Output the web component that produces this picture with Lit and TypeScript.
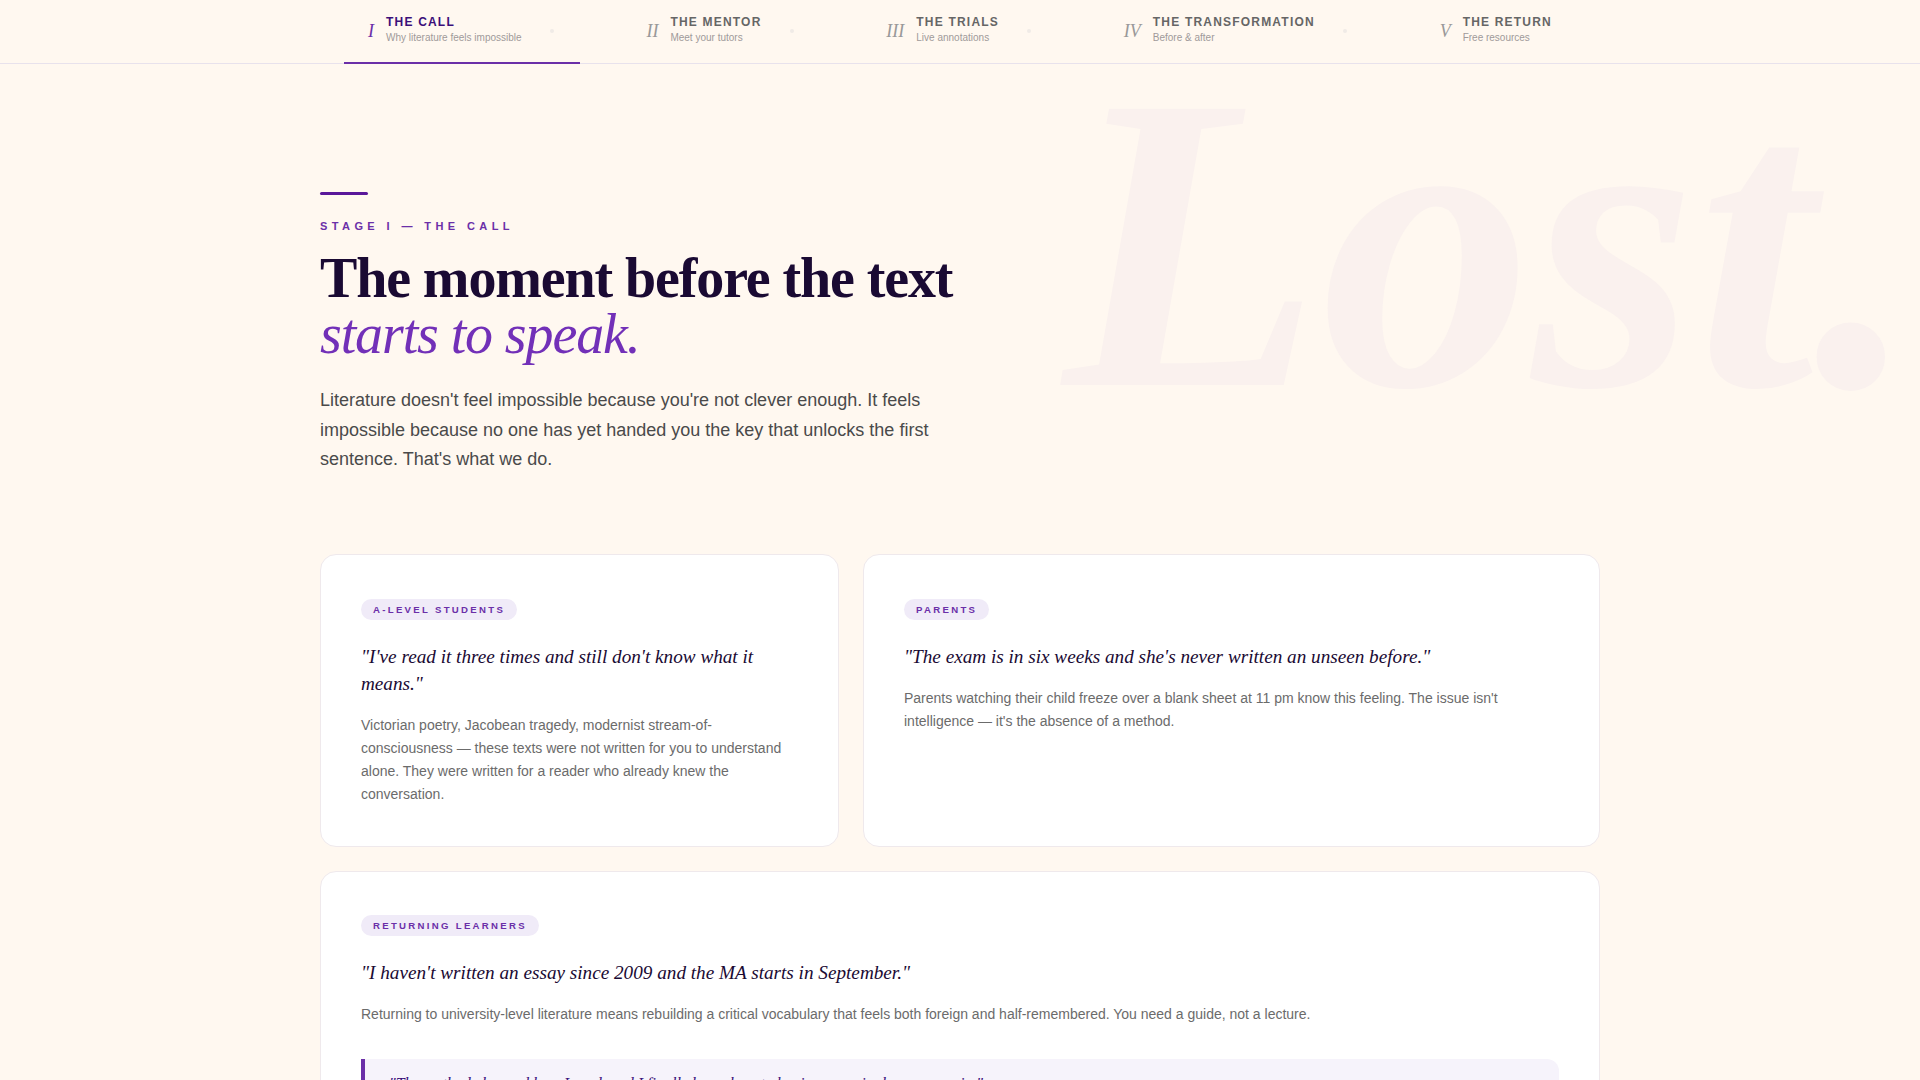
import { LitElement, html, css } from "lit";
import { customElement } from "lit/decorators.js";

const stages = [
  ["I", "THE CALL", "Why literature feels impossible"],
  ["II", "THE MENTOR", "Meet your tutors"],
  ["III", "THE TRIALS", "Live annotations"],
  ["IV", "THE TRANSFORMATION", "Before & after"],
  ["V", "THE RETURN", "Free resources"],
];

@customElement("app-root")
export class AppRoot extends LitElement {
  static styles = css`
    :host { display: block; background: #fff8f0; font-family: "Liberation Sans", Arial, sans-serif; overflow: hidden; position: relative; height: 1080px; }
    * { box-sizing: border-box; }
    .nav { height: 64px; border-bottom: 1px solid #e8e2ec; }
    .nav-in { max-width: 1280px; margin: 0 auto; padding: 0 24px; display: flex; justify-content: space-between; height: 64px; }
    .tab { display: flex; align-items: center; gap: 12px; padding: 0 24px; height: 64px; border-bottom: 2px solid transparent; }
    .tab.on { border-bottom-color: #6b2fa8; }
    .num { font-family: "Liberation Serif", serif; font-style: italic; font-size: 18px; color: #999; line-height: 1; }
    .on .num { color: #6b2fa8; }
    .txt { display: block; padding-bottom: 3px; }
    .tt { display: block; font-size: 12px; font-weight: 700; letter-spacing: 0.1em; color: #666; line-height: 15px; }
    .on .tt { color: #3b0f7a; }
    .ts { display: block; font-size: 10px; color: #a09a9a; line-height: 15px; }
    .dot { width: 4px; height: 4px; border-radius: 50%; background: #f0ebe7; margin-left: 16px; margin-right: 2px; }
    .main { max-width: 1280px; margin: 0 auto; position: relative; }
    .ghost { position: absolute; right: -319px; top: -32px; font-family: "Liberation Serif", serif; font-style: italic; font-weight: 700; font-size: 422px; line-height: 1; color: #faf1ee; white-space: nowrap; pointer-events: none; }
    .hero { position: relative; padding-top: 128px; }
    .rule { width: 48px; height: 3px; background: #5a189a; border-radius: 2px; }
    .eye { margin-top: 26px; font-size: 11px; font-weight: 700; letter-spacing: 0.4em; color: #6b2fa8; line-height: 11px; }
    h1 { margin: 18px 0 0; font-family: "Liberation Serif", serif; font-weight: 700; font-size: 56px; line-height: 56px; letter-spacing: -0.02em; color: #1a0a33; }
    h1 em { display: block; font-weight: 400; color: #7230b8; }
    .lead { margin: 24px 0 0; max-width: 620px; font-size: 18px; line-height: 29.7px; color: #4a4a4a; }
    .row { display: grid; grid-template-columns: 519px 1fr; gap: 24px; margin-top: 79px; }
    .card { background: #fff; border: 1px solid #efe9ec; border-radius: 16px; padding: 40px; }
    .wide { margin-top: 24px; }
    .tag { display: inline-block; font-size: 9.6px; font-weight: 700; letter-spacing: 0.24em; color: #6b2fa8; background: #f0ebf8; border-radius: 20px; padding: 5px 12px; line-height: 11px; margin-top: 3.5px; }
    .q { margin: 24px 0 0; font-family: "Liberation Serif", serif; font-style: italic; font-size: 19.2px; line-height: 26.9px; color: #1a0a33; }
    .b { margin: 16.5px 0 0; font-size: 14px; line-height: 22.9px; color: #6b6b6b; }
    .call { margin-top: 33px; border-left: 4px solid #6b2fa8; background: #f6f3fb; border-radius: 0 12px 12px 0; padding: 16px 24px; font-family: "Liberation Serif", serif; font-style: italic; font-size: 16px; line-height: 18px; color: #3b0f7a; }
  `;
  render() {
    return html`
      <div class="nav"><div class="nav-in">
        ${stages.map((s, i) => html`<div class="tab ${i === 0 ? "on" : ""}">
          <span class="num">${s[0]}</span>
          <span class="txt"><span class="tt">${s[1]}</span><span class="ts">${s[2]}</span></span>
          ${i < 4 ? html`<span class="dot"></span>` : ""}
        </div>`)}
      </div></div>
      <div class="main">
        <div class="ghost">Lost.</div>
        <div class="hero">
          <div class="rule"></div>
          <div class="eye">STAGE I — THE CALL</div>
          <h1>The moment before the text<em>starts to speak.</em></h1>
          <p class="lead">Literature doesn't feel impossible because you're not clever enough. It feels impossible because no one has yet handed you the key that unlocks the first sentence. That's what we do.</p>
        </div>
        <div class="row">
          <div class="card"><span class="tag">A-LEVEL STUDENTS</span>
            <p class="q">"I've read it three times and still don't know what it means."</p>
            <p class="b">Victorian poetry, Jacobean tragedy, modernist stream-of-consciousness — these texts were not written for you to understand alone. They were written for a reader who already knew the conversation.</p></div>
          <div class="card"><span class="tag">PARENTS</span>
            <p class="q">"The exam is in six weeks and she's never written an unseen before."</p>
            <p class="b">Parents watching their child freeze over a blank sheet at 11 pm know this feeling. The issue isn't intelligence — it's the absence of a method.</p></div>
        </div>
        <div class="card wide"><span class="tag">RETURNING LEARNERS</span>
          <p class="q">"I haven't written an essay since 2009 and the MA starts in September."</p>
          <p class="b">Returning to university-level literature means rebuilding a critical vocabulary that feels both foreign and half-remembered. You need a guide, not a lecture.</p>
          <div class="call">"The method changed how I read, and I finally know how to begin every single essay again."</div></div>
      </div>`;
  }
}
